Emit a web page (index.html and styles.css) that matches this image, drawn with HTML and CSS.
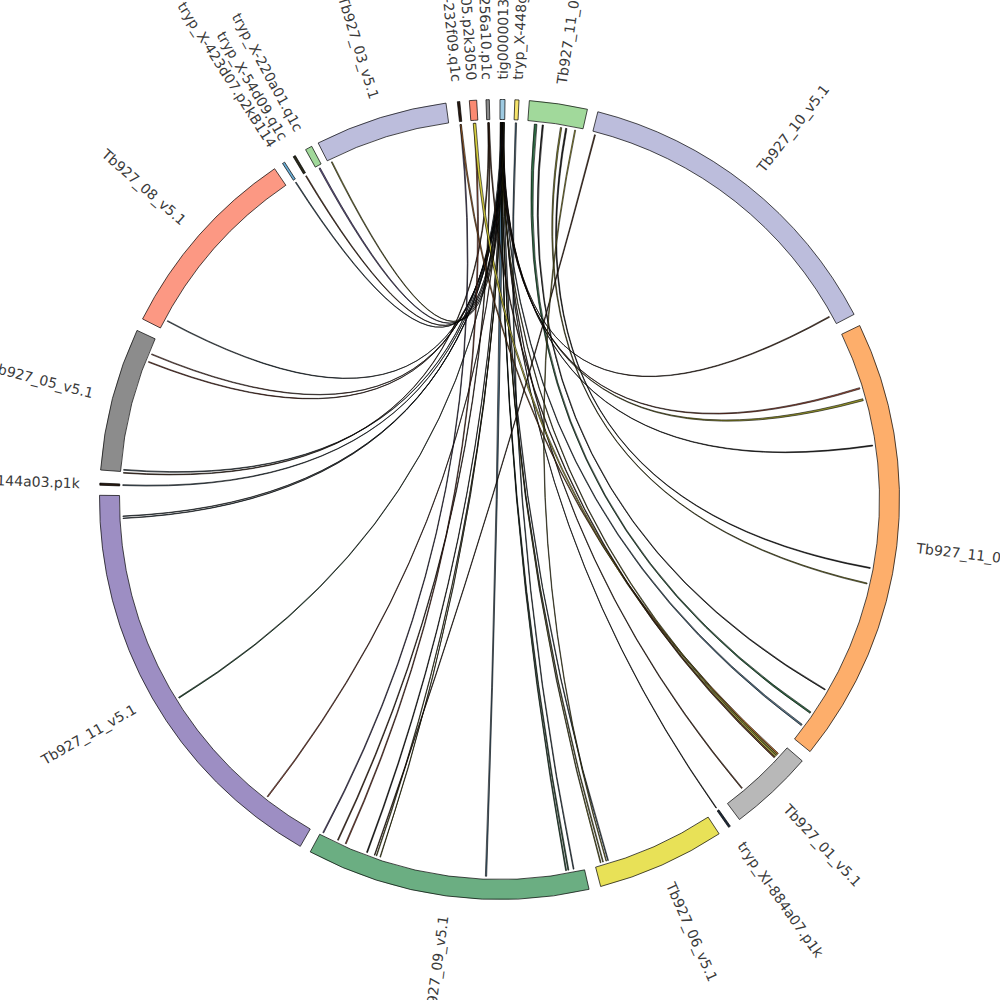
FILE: index.html
```html
<!DOCTYPE html>
<html lang="en">
<head>
<meta charset="utf-8">
<title>Circos plot</title>
<link rel="stylesheet" href="styles.css">
</head>
<body>
<div class="canvas">
  <svg id="circos" class="circos" width="1000" height="1000" viewBox="0 0 1000 1000" xmlns="http://www.w3.org/2000/svg"></svg>
</div>
<script src="script.js"></script>
</body>
</html>
```

FILE: styles.css
```css
html, body {
  margin: 0;
  padding: 0;
  background: #ffffff;
  overflow: hidden;
}

.canvas {
  width: 1000px;
  height: 1000px;
}

.circos {
  display: block;
}

.chord {
  stroke: #000000;
  stroke-width: 0.6;
  stroke-linejoin: round;
}

.seg {
  stroke: #000000;
  stroke-width: 0.7;
}

.label {
  font-family: "DejaVu Sans", "Liberation Sans", sans-serif;
  font-size: 14px;
  fill: #3a3a3a;
  dominant-baseline: central;
}
```

FILE: script.js
```js
(function () {
  var NS = 'http://www.w3.org/2000/svg';
  var svg = document.getElementById('circos');
  var CX = 499.5, CY = 499.5, RIN = 380, ROUT = 400, RCH = 377, RLAB = 420;

  function P(r, a) {
    var t = a * Math.PI / 180;
    return (CX + r * Math.sin(t)).toFixed(2) + ',' + (CY - r * Math.cos(t)).toFixed(2);
  }
  function el(tag, attrs, parent) {
    var e = document.createElementNS(NS, tag);
    for (var k in attrs) e.setAttribute(k, attrs[k]);
    parent.appendChild(e);
    return e;
  }

  var segs = [
    ['tig00000136', 0.07, 0.79, '#9ecae1'],
    ['tryp_X-448g04.q1c', 2.2, 2.8, '#f6e46b'],
    ['Tb927_11_02_v5.1', 4.28, 12.7, '#a1d99b'],
    ['Tb927_10_v5.1', 14.23, 62.43, '#bcbddc'],
    ['Tb927_11_01_v5.1', 64.22, 129.07, '#fdae6b'],
    ['Tb927_01_v5.1', 130.81, 143.14, '#b8b8b8'],
    ['tryp_XI-884a07.p1k', 144.75, 145.05, '#1d2a3a'],
    ['Tb927_06_v5.1', 146.7, 165.35, '#e8e157'],
    ['Tb927_09_v5.1', 167.06, 208.24, '#6bae82'],
    ['Tb927_11_v5.1', 209.87, 270.6, '#9d8ec3'],
    ['tryp_XI-1144a03.p1k', 272.05, 272.35, '#2a1a10'],
    ['Tb927_05_v5.1', 274.23, 295.01, '#8c8c8c'],
    ['Tb927_08_v5.1', 296.83, 325.79, '#fc9883'],
    ['tryp_X-423d07.p2kB114', 327.15, 327.5, '#6baed6'],
    ['tryp_X-54d09.q1c', 328.95, 329.3, '#2a2a1a'],
    ['tryp_X-220a01.q1c', 331.0, 332.0, '#a1d99b'],
    ['Tb927_03_v5.1', 333.04, 352.31, '#bcbddc'],
    ['tryp_X-232f09.q1c', 353.95, 354.3, '#2a1a10'],
    ['tryp_X-178a05.p2k3050', 355.67, 356.73, '#fb8a72'],
    ['tryp_XI-256a10.p1c', 358.06, 358.54, '#8a8a8a']
  ];

  var C = {
    brown: '#6b3d22', red: '#b5533c', olive: '#9a9a2e', blue: '#4d6f86',
    green: '#2f6b45', purple: '#6c5b9a', yellow: '#d8d040', orange: '#c8752d',
    dark: '#222222'
  };

  var chords = [
    [298.2, 298.32, 0.30, 0.36, 'blue'],
    [292.6, 292.72, 0.44, 0.48, 'red'],
    [291.35, 291.47, 0.40, 0.44, 'red'],
    [274.45, 274.58, 0.18, 0.26, 'blue'],
    [274.0, 274.12, 358.2, 358.35, 'brown'],
    [272.12, 272.26, 0.52, 0.58, 'blue'],
    [267.42, 267.5, 0.66, 0.72, 'blue'],
    [267.1, 267.18, 0.62, 0.66, 'blue'],
    [238.2, 238.35, 0.45, 0.5, 'green'],
    [217.9, 218.05, 0.35, 0.4, 'red'],
    [207.8, 207.95, 354.0, 354.15, 'purple'],
    [205.3, 205.45, 358.3, 358.42, 'brown'],
    [204.0, 204.15, 356.1, 356.3, 'red'],
    [200.5, 200.65, 0.3, 0.35, 'dark'],
    [199.0, 199.1, 0.55, 0.6, 'olive'],
    [198.4, 198.5, 0.5, 0.55, 'olive'],
    [181.95, 182.15, 0.1, 0.6, 'blue'],
    [169.75, 169.9, 0.2, 0.25, 'green'],
    [169.4, 169.55, 0.15, 0.2, 'green'],
    [168.6, 168.72, 2.4, 2.6, 'blue'],
    [164.38, 164.5, 0.35, 0.4, 'olive'],
    [164.0, 164.12, 0.3, 0.35, 'olive'],
    [163.2, 163.32, 0.6, 0.7, 'blue'],
    [144.85, 144.95, 0.5, 0.55, 'dark'],
    [139.9, 140.05, 0.35, 0.45, 'brown'],
    [132.3, 132.5, 354.0, 354.2, 'orange'],
    [132.55, 132.75, 0.2, 0.3, 'olive'],
    [132.8, 133.0, 356.0, 356.4, 'yellow'],
    [133.05, 133.25, 358.3, 358.45, 'brown'],
    [126.6, 126.85, 0.45, 0.55, 'blue'],
    [124.3, 124.55, 5.3, 5.7, 'green'],
    [120.2, 120.35, 6.5, 6.7, 'dark'],
    [102.8, 102.95, 9.3, 9.5, 'olive'],
    [100.4, 100.55, 10.1, 10.3, 'dark'],
    [81.7, 81.85, 0.45, 0.55, 'dark'],
    [74.5, 74.8, 0.3, 0.35, 'olive'],
    [72.75, 72.95, 0.2, 0.25, 'red'],
    [60.95, 61.1, 0.6, 0.65, 'brown'],
    [14.6, 14.75, 199.3, 199.4, 'brown'],
    [11.5, 11.65, 163.5, 163.6, 'yellow'],
    [327.22, 327.35, 0.25, 0.3, 'blue'],
    [329.05, 329.2, 0.4, 0.45, 'brown'],
    [331.4, 331.6, 0.55, 0.6, 'purple'],
    [333.5, 333.65, 0.65, 0.7, 'olive']
  ];

  var gChords = el('g', { 'class': 'chords' }, svg);
  chords.forEach(function (c) {
    var p1 = P(RCH, c[0]), p2 = P(RCH, c[1]), q1 = P(RCH, c[2]), q2 = P(RCH, c[3]);
    var d = 'M' + p1 + ' A' + RCH + ',' + RCH + ' 0 0 1 ' + p2 +
      ' Q' + CX + ',' + CY + ' ' + q1 +
      ' A' + RCH + ',' + RCH + ' 0 0 1 ' + q2 +
      ' Q' + CX + ',' + CY + ' ' + p1 + ' Z';
    el('path', { d: d, 'class': 'chord', fill: C[c[4]] }, gChords);
  });

  var gSegs = el('g', { 'class': 'segs' }, svg);
  var gLabs = el('g', { 'class': 'labels' }, svg);
  segs.forEach(function (s) {
    var a1 = s[1], a2 = s[2];
    var large = (a2 - a1) > 180 ? 1 : 0;
    var d = 'M' + P(ROUT, a1) + ' A' + ROUT + ',' + ROUT + ' 0 ' + large + ' 1 ' + P(ROUT, a2) +
      ' L' + P(RIN, a2) + ' A' + RIN + ',' + RIN + ' 0 ' + large + ' 0 ' + P(RIN, a1) + ' Z';
    el('path', { d: d, 'class': 'seg', fill: s[3] }, gSegs);

    var mid = (a1 + a2) / 2;
    var right = mid < 180;
    var t = el('text', {
      'class': 'label',
      x: right ? CX + RLAB : CX - RLAB,
      y: CY,
      'text-anchor': right ? 'start' : 'end',
      transform: 'rotate(' + (right ? mid - 90 : mid + 90).toFixed(2) + ' ' + CX + ' ' + CY + ')'
    }, gLabs);
    t.textContent = s[0];
  });
})();
```
